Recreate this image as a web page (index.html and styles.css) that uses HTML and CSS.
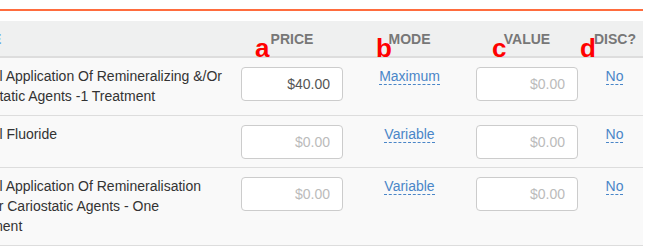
FILE: index.html
```html
<!DOCTYPE html>
<html lang="en">
<head>
<meta charset="utf-8">
<title>Fees</title>
<link rel="stylesheet" href="styles.css">
</head>
<body>
<div class="page">
  <div class="accent"></div>
  <div class="viewport">
    <table class="fees">
      <colgroup>
        <col class="c-desc"><col class="c-price"><col class="c-mode"><col class="c-value"><col class="c-disc">
      </colgroup>
      <thead>
        <tr>
          <th class="th-desc"><span class="sort">CODE</span></th>
          <th>PRICE</th>
          <th>MODE</th>
          <th>VALUE</th>
          <th>DISC?</th>
        </tr>
      </thead>
      <tbody>
        <tr>
          <td class="desc">Topical Application Of Remineralizing &amp;/Or Cariostatic Agents -1 Treatment</td>
          <td><input class="money" type="text" value="$40.00"></td>
          <td class="ctr"><span class="editable">Maximum</span></td>
          <td><input class="money" type="text" placeholder="$0.00"></td>
          <td class="ctr"><span class="editable">No</span></td>
        </tr>
        <tr>
          <td class="desc">Topical Fluoride</td>
          <td><input class="money" type="text" placeholder="$0.00"></td>
          <td class="ctr"><span class="editable">Variable</span></td>
          <td><input class="money" type="text" placeholder="$0.00"></td>
          <td class="ctr"><span class="editable">No</span></td>
        </tr>
        <tr>
          <td class="desc">Topical Application Of Remineralisation And/Or Cariostatic Agents - One Treatment</td>
          <td><input class="money" type="text" placeholder="$0.00"></td>
          <td class="ctr"><span class="editable">Variable</span></td>
          <td><input class="money" type="text" placeholder="$0.00"></td>
          <td class="ctr"><span class="editable">No</span></td>
        </tr>
      </tbody>
    </table>
  </div>
  <span class="mark mark-a">a</span>
  <span class="mark mark-b">b</span>
  <span class="mark mark-c">c</span>
  <span class="mark mark-d">d</span>
</div>
</body>
</html>
```
FILE: styles.css
```css
html, body {
  margin: 0;
  padding: 0;
  background: #fff;
}
body {
  font-family: "Liberation Sans", Arial, sans-serif;
  font-size: 14px;
  line-height: 20px;
  color: #333;
}
.page {
  position: relative;
  width: 643px;
  height: 250px;
  overflow: hidden;
}
.accent {
  margin-top: 9px;
  height: 2px;
  background: #ff6c3e;
}
.viewport {
  margin-top: 10px;
  width: 643px;
  overflow: hidden;
}
.fees {
  margin-left: -49px;
  width: 692px;
  table-layout: fixed;
  border-collapse: collapse;
  border-spacing: 0;
}
.c-desc { width: 282px; }
.c-price { width: 118px; }
.c-mode { width: 117px; }
.c-value { width: 118px; }
.c-disc { width: 57px; }

.fees th {
  background: #eff0f0;
  color: #777;
  font-weight: bold;
  text-align: center;
  padding: 8px 8px 7px;
  border-bottom: 2px solid #ddd;
  vertical-align: bottom;
}
.fees th.th-desc {
  text-align: left;
  padding-left: 10px;
}
.sort {
  color: #6aaae6;
}
.fees td {
  background: #f9f9f9;
  padding: 8px;
  border-bottom: 1px solid #ddd;
  vertical-align: top;
}
.fees td.desc {
  padding-bottom: 9px;
}
.fees td.ctr {
  text-align: center;
}
.money {
  display: block;
  box-sizing: border-box;
  width: 102px;
  height: 34px;
  margin: 1px 0 0;
  padding: 6px 12px;
  border: 1px solid #ccc;
  border-radius: 4px;
  background: #fff;
  font-family: "Liberation Sans", Arial, sans-serif;
  font-size: 14px;
  color: #555;
  text-align: right;
}
.money::placeholder {
  color: #bbb;
}
.editable {
  color: #4a86c8;
  border-bottom: 1px dashed #4a86c8;
}
.mark {
  position: absolute;
  top: 35px;
  font-family: "Liberation Sans", Arial, sans-serif;
  font-size: 26px;
  line-height: 26px;
  font-weight: bold;
  color: #f00;
}
.mark-a { left: 255px; }
.mark-b { left: 376px; }
.mark-c { left: 492px; }
.mark-d { left: 580px; }
```
